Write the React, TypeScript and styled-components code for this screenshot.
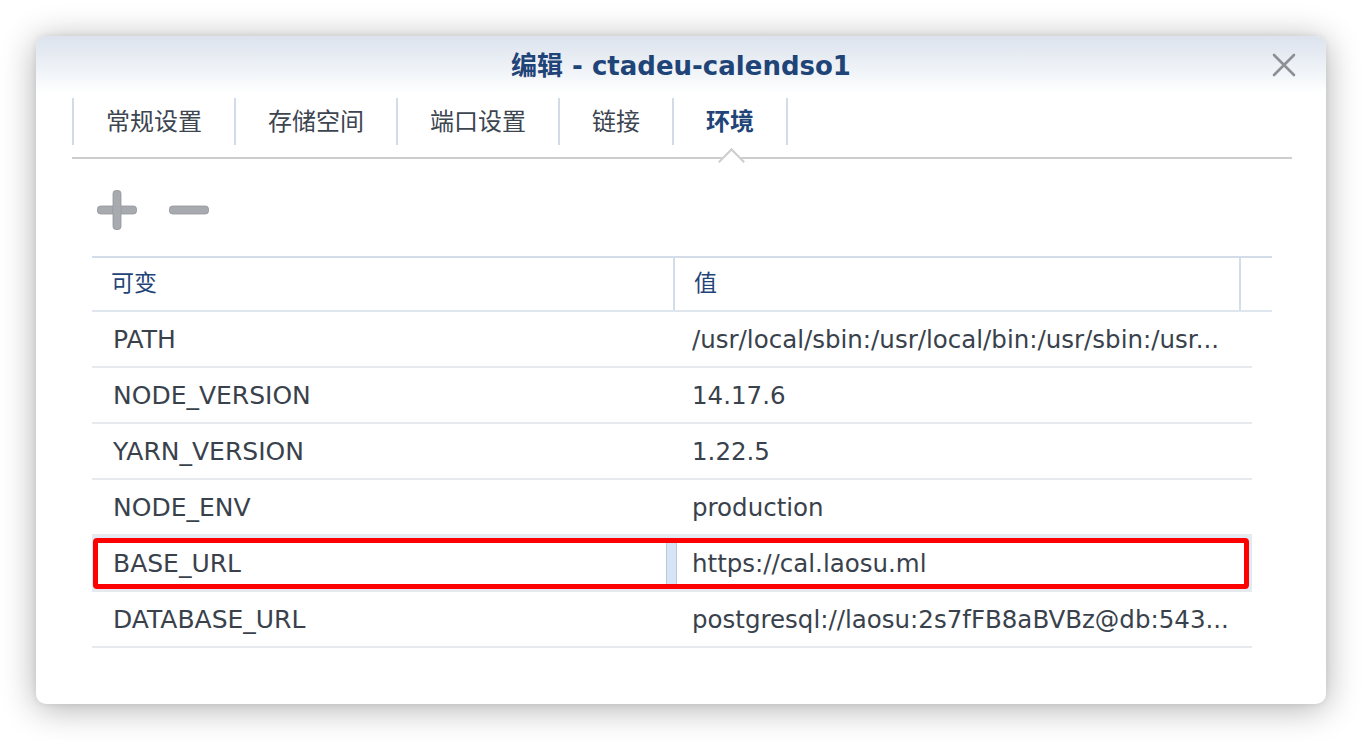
import React from "react";
import styled, { createGlobalStyle } from "styled-components";

const GlobalStyle = createGlobalStyle`
  html, body { margin: 0; padding: 0; background: #ffffff; }
  body { font-family: "DejaVu Sans", "Noto Sans CJK SC", sans-serif; }
  * { box-sizing: border-box; }
`;

const Stage = styled.div`
  width: 1362px;
  height: 740px;
  padding: 36px 36px 0 36px;
  overflow: hidden;
`;

const Window = styled.div`
  width: 1290px;
  height: 668px;
  background: #ffffff;
  border-radius: 10px;
  box-shadow: 0 4px 34px rgba(0, 0, 0, 0.32), 0 0 6px rgba(0, 0, 0, 0.08);
  overflow: hidden;
  display: flex;
  flex-direction: column;
`;

const TitleBar = styled.div`
  height: 58px;
  display: grid;
  grid-template-columns: 1fr auto 1fr;
  align-items: center;
  background: linear-gradient(#dce3ed 0%, #eef2f7 55%, #ffffff 100%);
`;

const Title = styled.div`
  grid-column: 2;
  font-family: "DejaVu Sans", "Noto Sans CJK SC", sans-serif;
  font-weight: bold;
  font-size: 26px;
  color: #1f4477;
  white-space: nowrap;
  padding-bottom: 4px;
`;

const CloseButton = styled.div`
  grid-column: 3;
  justify-self: end;
  margin-right: 30px;
  width: 24px;
  height: 24px;
  display: flex;
`;

const TabStrip = styled.div`
  margin: 4px 34px 0 36px;
  padding-bottom: 12px;
  border-bottom: 2px solid #cdcdcd;
  display: flex;
`;

const Tab = styled.div<{ $active?: boolean; $last?: boolean }>`
  position: relative;
  height: 47px;
  display: flex;
  align-items: center;
  padding: 0 32px 4px 32px;
  border-left: 2px solid #d2dce8;
  ${(p) => (p.$last ? "border-right: 2px solid #d2dce8;" : "")}
  font-family: "Noto Sans CJK SC", sans-serif;
  font-size: 24px;
  font-weight: ${(p) => (p.$active ? 700 : 400)};
  color: ${(p) => (p.$active ? "#1f4477" : "#3c4550")};
  line-height: 1;
  ${(p) =>
    p.$active
      ? `&::after {
    content: "";
    position: absolute;
    left: 50%;
    top: 54px;
    width: 17px;
    height: 17px;
    margin-left: -8px;
    background: #ffffff;
    border-top: 2px solid #cdcdcd;
    border-left: 2px solid #cdcdcd;
    transform: rotate(45deg);
  }`
      : ""}
`;

const Toolbar = styled.div`
  margin: 31px 0 0 61px;
  display: flex;
  gap: 32px;
  height: 40px;
`;

const IconButton = styled.div`
  width: 40px;
  height: 40px;
  display: flex;
`;

const Table = styled.div`
  margin: 26px 0 0 56px;
  width: 1180px;
`;

const HeaderRow = styled.div`
  display: grid;
  grid-template-columns: 581px 566px 33px;
  height: 56px;
  border-top: 2px solid #d3dde9;
  border-bottom: 2px solid #dfe6ee;
`;

const HeaderCell = styled.div<{ $divider?: boolean }>`
  display: flex;
  align-items: center;
  padding: 0 0 7px 19px;
  font-family: "Noto Sans CJK SC", sans-serif;
  font-size: 23px;
  color: #1f4477;
  ${(p) => (p.$divider ? "border-left: 2px solid #d3dde9;" : "")}
`;

const Row = styled.div`
  width: 1160px;
  height: 56px;
  display: grid;
  grid-template-columns: 581px 579px;
  border-bottom: 2px solid #e6eaef;
  background: #ffffff;
`;

const SelectedRow = styled.div`
  width: 1160px;
  height: 56px;
  display: flex;
  padding: 2px 3px 1px 1px;
  border-bottom: 2px solid #e6eaef;
  background: #e1eaf5;
`;

const Cell = styled.div<{ $value?: boolean }>`
  display: flex;
  align-items: center;
  min-width: 0;
  padding: 0 ${(p) => (p.$value ? "8px" : "12px")} 0 ${(p) =>
      p.$value ? "19px" : "21px"};
  font-family: "DejaVu Sans", "Noto Sans CJK SC", sans-serif;
  font-size: ${(p) => (p.$value ? "24.5px" : "25px")};
  color: #39424c;
`;

const CellText = styled.span`
  display: block;
  white-space: nowrap;
  overflow: hidden;
  text-overflow: ellipsis;
  width: 100%;
`;

const EditFrame = styled.div`
  flex: 1;
  border: 5px solid #ff0000;
  border-radius: 4px;
  background: #ffffff;
  display: grid;
  grid-template-columns: 568px 11px 1fr;
`;

const EditCell = styled.div<{ $value?: boolean }>`
  display: flex;
  align-items: center;
  padding-left: 15px;
  font-family: "DejaVu Sans", "Noto Sans CJK SC", sans-serif;
  font-size: ${(p) => (p.$value ? "24.5px" : "25px")};
  color: #39424c;
  white-space: nowrap;
  overflow: hidden;
`;

const EditDivider = styled.div`
  background: #d7e4f5;
  border-left: 1px solid #b7c7dc;
  border-right: 1px solid #b7c7dc;
`;

const CloseIcon = () => (
  <svg width="24" height="24" viewBox="0 0 24 24">
    <path d="M2 2 L22 22 M22 2 L2 22" stroke="#8c9096" strokeWidth="2.6" strokeLinecap="round" />
  </svg>
);

const PlusIcon = () => (
  <svg width="40" height="40" viewBox="0 0 40 40">
    <rect x="0.5" y="16" width="39" height="8" rx="3" fill="#a7aaaf" stroke="#93969b" strokeWidth="0.8" />
    <rect x="16" y="0.5" width="8" height="39" rx="3" fill="#a7aaaf" stroke="#93969b" strokeWidth="0.8" />
    <rect x="16.4" y="16.4" width="7.2" height="7.2" fill="#a7aaaf" />
  </svg>
);

const MinusIcon = () => (
  <svg width="40" height="40" viewBox="0 0 40 40">
    <rect x="0.5" y="16" width="39" height="8" rx="3" fill="#a7aaaf" stroke="#93969b" strokeWidth="0.8" />
  </svg>
);

const tabs = ["常规设置", "存储空间", "端口设置", "链接", "环境"];

const rows: { name: string; value: string; selected?: boolean }[] = [
  { name: "PATH", value: "/usr/local/sbin:/usr/local/bin:/usr/sbin:/usr..." },
  { name: "NODE_VERSION", value: "14.17.6" },
  { name: "YARN_VERSION", value: "1.22.5" },
  { name: "NODE_ENV", value: "production" },
  { name: "BASE_URL", value: "https://cal.laosu.ml", selected: true },
  { name: "DATABASE_URL", value: "postgresql://laosu:2s7fFB8aBVBz@db:543..." },
];

export default function App() {
  return (
    <>
      <GlobalStyle />
      <Stage>
        <Window>
          <TitleBar>
            <Title>编辑 - ctadeu-calendso1</Title>
            <CloseButton>
              <CloseIcon />
            </CloseButton>
          </TitleBar>
          <TabStrip>
            {tabs.map((t, i) => (
              <Tab key={t} $active={i === tabs.length - 1} $last={i === tabs.length - 1}>
                {t}
              </Tab>
            ))}
          </TabStrip>
          <Toolbar>
            <IconButton>
              <PlusIcon />
            </IconButton>
            <IconButton>
              <MinusIcon />
            </IconButton>
          </Toolbar>
          <Table>
            <HeaderRow>
              <HeaderCell>可变</HeaderCell>
              <HeaderCell $divider>值</HeaderCell>
              <HeaderCell $divider />
            </HeaderRow>
            {rows.map((r) =>
              r.selected ? (
                <SelectedRow key={r.name}>
                  <EditFrame>
                    <EditCell>{r.name}</EditCell>
                    <EditDivider />
                    <EditCell $value>{r.value}</EditCell>
                  </EditFrame>
                </SelectedRow>
              ) : (
                <Row key={r.name}>
                  <Cell>
                    <CellText>{r.name}</CellText>
                  </Cell>
                  <Cell $value>
                    <CellText>{r.value}</CellText>
                  </Cell>
                </Row>
              )
            )}
          </Table>
        </Window>
      </Stage>
    </>
  );
}
